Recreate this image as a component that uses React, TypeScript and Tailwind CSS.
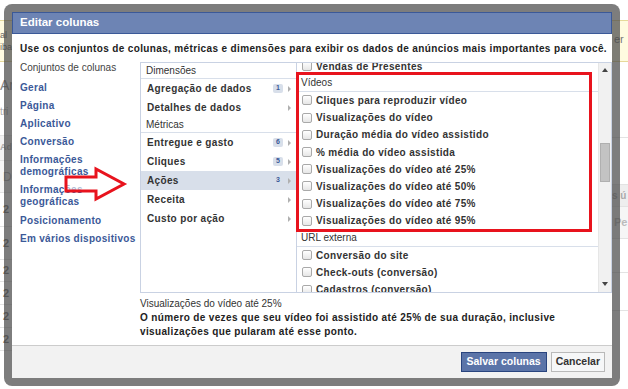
import React from 'react';

type MenuItem = { label: string; badge?: string; active?: boolean };

const dimensions: MenuItem[] = [
  { label: 'Agregação de dados', badge: '1' },
  { label: 'Detalhes de dados' },
];

const metrics: MenuItem[] = [
  { label: 'Entregue e gasto', badge: '6' },
  { label: 'Cliques', badge: '5' },
  { label: 'Ações', badge: '3', active: true },
  { label: 'Receita' },
  { label: 'Custo por ação' },
];

const presets = [
  'Geral',
  'Página',
  'Aplicativo',
  'Conversão',
  'Informações demográficas',
  'Informações geográficas',
  'Posicionamento',
  'Em vários dispositivos',
];

const videoMetrics = [
  'Cliques para reproduzir vídeo',
  'Visualizações do vídeo',
  'Duração média do vídeo assistido',
  '% média do vídeo assistida',
  'Visualizações do vídeo até 25%',
  'Visualizações do vídeo até 50%',
  'Visualizações do vídeo até 75%',
  'Visualizações do vídeo até 95%',
];

const urlMetrics = ['Conversão do site', 'Check-outs (conversão)', 'Cadastros (conversão)'];

function Checkbox() {
  return (
    <span className="shrink-0 w-[10px] h-[10px] rounded-[2px] border border-[#a9a9a9] bg-linear-to-b from-white to-[#e6e6e6]" />
  );
}

function CheckRow({ label }: { label: string }) {
  return (
    <div className="h-[17.2px] flex items-center gap-[4px] pl-[5px] text-[10px] font-bold tracking-[0.35px] text-[#333]">
      <Checkbox />
      <span className="whitespace-nowrap">{label}</span>
    </div>
  );
}

function SectionHeader({ label }: { label: string }) {
  return (
    <div className="h-[17.2px] flex items-center pl-[4px] text-[10px] text-[#333] border-b border-[#d8dfea]">
      {label}
    </div>
  );
}

function MenuRow({ item }: { item: MenuItem }) {
  return (
    <div
      className={`h-[19px] flex items-center pl-[6px] pr-[5px] text-[10px] font-bold tracking-[0.35px] text-[#333] ${
        item.active ? 'bg-[#d8dfea]' : ''
      }`}
    >
      <span className="flex-1 whitespace-nowrap">{item.label}</span>
      {item.badge && (
        <span className="w-[10px] h-[9px] flex items-center justify-center rounded-[2px] bg-[#d8dfea] text-[7px] font-bold tracking-normal text-[#3b5998]">
          {item.badge}
        </span>
      )}
      {/* little grey caret */}
      <span className="ml-[5px] w-0 h-0 border-y-[3px] border-y-transparent border-l-[3px] border-l-[#b0b0b0]" />
    </div>
  );
}

export default function App() {
  return (
    <div className="relative w-[628px] h-[389px] overflow-hidden bg-white font-['Liberation_Sans',Arial,sans-serif]">
      {/* page behind the dialog, only its edges show */}
      <div className="h-full flex">
        <div className="w-[14px] overflow-hidden whitespace-nowrap text-[#888]">
          <div className="mt-[20px] h-[42px] flex flex-col justify-center bg-[#fffbe0] border-y border-[#e6d99a] text-[9px] leading-[12px] text-[#666]">
            <span>al</span>
            <span>iba</span>
          </div>
          <div className="mt-[13px] text-[14px] leading-[20px] text-[#888]">Ar</div>
          <div className="mt-[8px] text-[10px] leading-[18px] text-[#aaa]">tri</div>
          <div className="mt-[14px] h-[26px] flex items-center border-y border-[#e3e3e3] bg-[#f2f2f2] text-[9px] font-bold text-[#aaa]">
            Ad
          </div>
          <div className="h-[32px] flex items-center pl-[3px] border-b border-[#e3e3e3] bg-[#f6f6f6] text-[12px] text-[#aaa]">
            D
          </div>
          {[34, 33, 22, 23, 23, 23].map((h, i) => (
            <div
              key={i}
              style={{ height: h }}
              className="flex items-center pl-[3px] border-b border-[#e3e3e3] text-[11px] font-bold text-[#777]"
            >
              2
            </div>
          ))}
        </div>
        <div className="flex-1" />
        <div className="w-[16px] overflow-hidden whitespace-nowrap">
          <div className="mt-[20px] h-[42px] pl-[2px] pt-[10px] bg-[#fffbe0] border-y border-[#e6d99a] text-[11px] text-[#777]">
            er
          </div>
          <div className="mt-[75px] h-[48px] border-y border-[#e3e3e3]" />
          <div className="h-[22px] flex items-center bg-[#eeeeee] border-b border-[#e3e3e3] text-[10px] font-bold text-[#aaa]">
            s ú
          </div>
          <div className="h-[32px] flex items-center pl-[2px] bg-[#f6f6f6] border-b border-[#e3e3e3] text-[11px] font-bold text-[#bbb]">
            Pe
          </div>
          <div className="h-[34px] border-b border-[#e3e3e3]" />
          <div className="h-[38px] border-b border-[#e3e3e3]" />
        </div>
      </div>

      {/* dialog */}
      <div className="absolute left-[4px] top-[4px] w-[616px] h-[382px] rounded-[8px] bg-[rgba(70,70,70,0.7)] p-[8px]">
        <div className="h-full flex flex-col bg-white">
          <div className="h-[22px] shrink-0 flex items-center bg-[#6d84b4] border border-[#3b5998] pl-[7px] text-[11.5px] font-bold text-white">
            Editar colunas
          </div>

          <div className="flex-1 flex flex-col pl-[8px] pt-[8px]">
            <p className="leading-[14px] text-[10px] font-bold tracking-[0.36px] text-[#222] whitespace-nowrap">
              Use os conjuntos de colunas, métricas e dimensões para exibir os dados de anúncios mais importantes para você.
            </p>

            <div className="mt-[6px] flex">
              {/* presets */}
              <div className="w-[120px] shrink-0">
                <div className="leading-[12px] text-[10px] text-[#444]">Conjuntos de colunas</div>
                <div className="mt-[8px] flex flex-col gap-[6.1px]">
                  {presets.map((p) => (
                    <a key={p} className="leading-[12px] text-[10px] font-bold tracking-[0.3px] text-[#3b5998]">
                      {p}
                    </a>
                  ))}
                </div>
              </div>

              {/* selector panels */}
              <div className="relative flex-1 h-[231px] flex border border-[#c9d2e3]">
                <div className="w-[156px] shrink-0 border-r border-[#c9d2e3]">
                  <div className="h-[16px] flex items-center pl-[5px] text-[10px] text-[#333] border-b border-[#d8dfea]">
                    Dimensões
                  </div>
                  {dimensions.map((d) => (
                    <MenuRow key={d.label} item={d} />
                  ))}
                  <div className="h-[16px] flex items-center pl-[5px] text-[10px] text-[#333] border-b border-[#d8dfea]">
                    Métricas
                  </div>
                  {metrics.map((m) => (
                    <MenuRow key={m.label} item={m} />
                  ))}
                </div>

                <div className="flex-1 flex overflow-hidden">
                  <div className="flex-1 overflow-hidden">
                    <div className="-mt-[5.5px]">
                      <CheckRow label="Vendas de Presentes" />
                      <SectionHeader label="Vídeos" />
                      {videoMetrics.map((v) => (
                        <CheckRow key={v} label={v} />
                      ))}
                      <SectionHeader label="URL externa" />
                      {urlMetrics.map((u) => (
                        <CheckRow key={u} label={u} />
                      ))}
                    </div>
                  </div>
                  {/* scrollbar */}
                  <div className="w-[13px] shrink-0 flex flex-col items-center bg-[#f1f1f1] border-l border-[#e6e6e6] pt-[5px] pb-[6px]">
                    <span className="w-0 h-0 border-x-[3px] border-x-transparent border-b-[4px] border-b-[#444]" />
                    <span className="mt-[71px] w-[10px] h-[39px] bg-[#c3c3c3] border border-[#b0b0b0]" />
                    <span className="flex-1" />
                    <span className="w-0 h-0 border-x-[3px] border-x-transparent border-t-[4px] border-t-[#444]" />
                  </div>
                </div>

                {/* red highlight around the video metrics */}
                <div className="absolute left-[155px] top-[9px] w-[296px] h-[160px] border-[3px] border-[#e8131d]" />
              </div>
            </div>

            <div className="ml-[120px] mt-[4px] text-[10px] leading-[14px] text-[#333]">
              <div>Visualizações do vídeo até 25%</div>
              <div className="font-bold tracking-[0.36px] text-[#222]">
                O número de vezes que seu vídeo foi assistido até 25% de sua duração, inclusive
                <br />
                visualizações que pularam até esse ponto.
              </div>
            </div>
          </div>

          <div className="h-[33px] shrink-0 flex items-center justify-end gap-[4px] pr-[7px] bg-[#f2f2f2] border-t border-[#cccccc]">
            <button className="h-[20px] px-[5px] bg-[#5b74a8] border border-[#29447e] text-[10.5px] font-bold text-white">
              Salvar colunas
            </button>
            <button className="h-[20px] px-[4px] bg-[#f6f7f8] border border-[#b9b9b9] text-[10.5px] font-bold text-[#333]">
              Cancelar
            </button>
          </div>
        </div>
      </div>

      {/* red annotation arrow */}
      <svg className="absolute left-[60px] top-[164px]" width="70" height="40" viewBox="0 0 70 40">
        <path
          d="M6 13 H36 V5 L64 20 L36 35 V27 H6 Z"
          fill="white"
          fillOpacity="0.6"
          stroke="#e8131d"
          strokeWidth="3"
          strokeLinejoin="miter"
        />
      </svg>
    </div>
  );
}
